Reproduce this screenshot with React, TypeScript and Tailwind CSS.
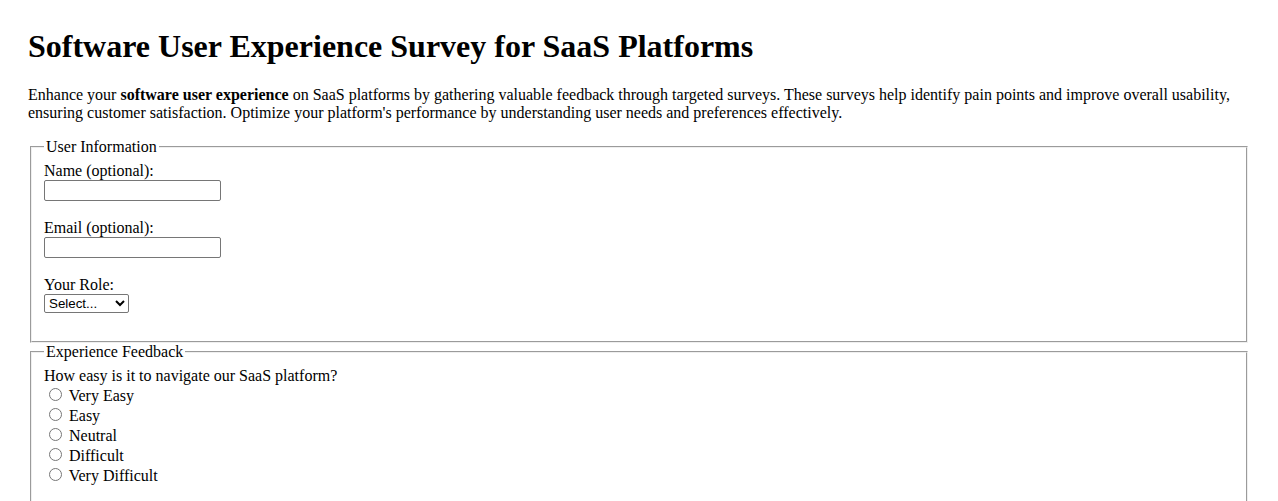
import React from "react";

const roles = ["Select...", "Developer", "Designer", "Manager", "Other"];
const ease = ["Very Easy", "Easy", "Neutral", "Difficult", "Very Difficult"];
const perf = ["Very Satisfied", "Satisfied", "Neutral", "Dissatisfied", "Very Dissatisfied"];

export default function App() {
  return (
    <div className="min-h-[501px] bg-white px-[28px] pt-[28px] pb-[28px] font-['Liberation_Serif',serif] text-[16px] leading-[normal] text-black">
      <h1 className="mb-[21.44px] text-[32px] font-bold leading-[normal]">
        Software User Experience Survey for SaaS Platforms
      </h1>
      <p className="mb-4">
        Enhance your <strong>software user experience</strong> on SaaS platforms by gathering valuable feedback
        through targeted surveys. These surveys help identify pain points and improve overall usability, ensuring
        customer satisfaction. Optimize your platform's performance by understanding user needs and preferences
        effectively.
      </p>
      <form className="flex flex-col">
        <fieldset className="mx-[2px] px-3 pt-[6px] pb-[10px] [border:2px_groove_threedface]">
          <legend className="px-[2px]">User Information</legend>
          <div className="flex flex-col items-start">
            <label htmlFor="name">Name (optional):</label>
            <input
              id="name"
              type="text"
              className="h-[21px] w-[177px] rounded-[2px] border border-[#767676] bg-white px-[2px] font-['Liberation_Sans',sans-serif] text-[13.333px]"
            />
            <label htmlFor="email" className="mt-[18px]">
              Email (optional):
            </label>
            <input
              id="email"
              type="email"
              className="h-[21px] w-[177px] rounded-[2px] border border-[#767676] bg-white px-[2px] font-['Liberation_Sans',sans-serif] text-[13.333px]"
            />
            <label htmlFor="role" className="mt-[18px]">
              Your Role:
            </label>
            <select
              id="role"
              defaultValue="Select..."
              className="mb-[18px] h-[19px] w-[85px] rounded-[2px] border border-[#767676] bg-white font-['Liberation_Sans',sans-serif] text-[13.333px] text-black"
            >
              {roles.map((r) => (
                <option key={r} value={r}>
                  {r}
                </option>
              ))}
            </select>
          </div>
        </fieldset>
        <fieldset className="mx-[2px] px-3 pt-[5.6px] pb-[10px] [border:2px_groove_threedface]">
          <legend className="px-[2px]">Experience Feedback</legend>
          <div>How easy is it to navigate our SaaS platform?</div>
          {ease.map((e) => (
            <div key={e}>
              <label>
                <input type="radio" name="navigation" value={e} className="mt-[3px] mr-[3px] ml-[5px]" /> {e}
              </label>
            </div>
          ))}
          <div className="mt-[40px]">How satisfied are you with the platform's performance?</div>
          {perf.map((e) => (
            <div key={e}>
              <label>
                <input type="radio" name="performance" value={e} className="mt-[3px] mr-[3px] ml-[5px]" /> {e}
              </label>
            </div>
          ))}
        </fieldset>
      </form>
    </div>
  );
}
